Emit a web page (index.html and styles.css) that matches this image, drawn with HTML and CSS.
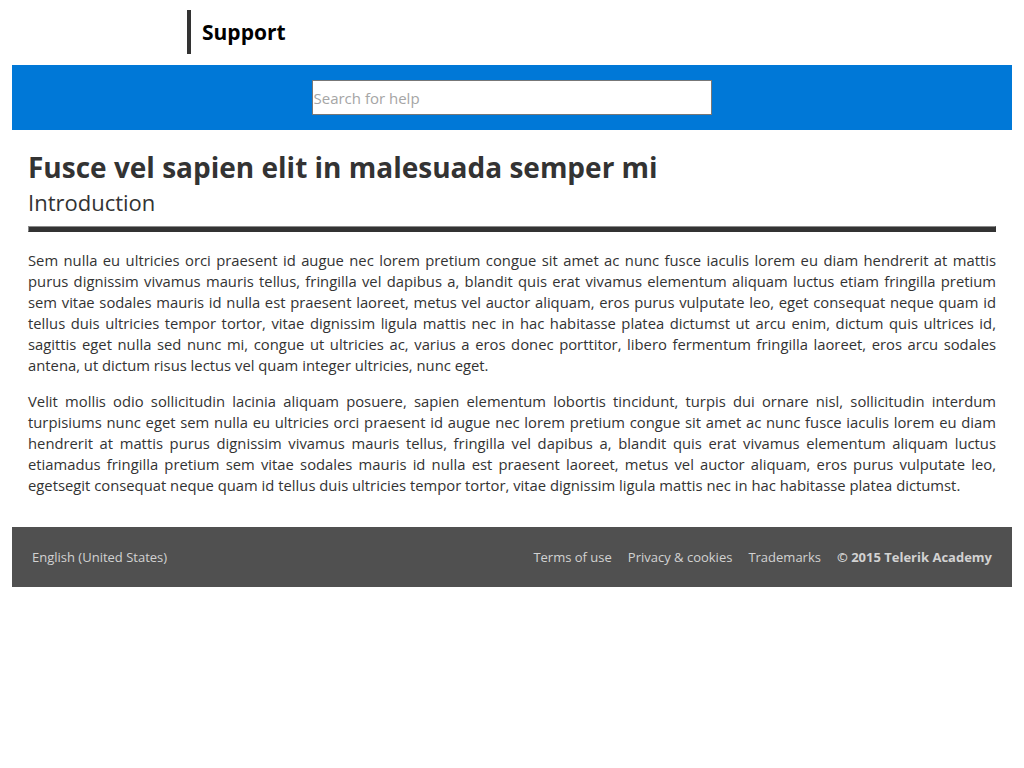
FILE: index.html
```html
<!DOCTYPE html>
<html lang="en">
<head>
<meta charset="utf-8">
<title>Support</title>
<link rel="stylesheet" href="styles.css">
</head>
<body>
<div class="page">
  <header class="top">
    <div class="brand">
      <span class="brand-bar"></span>
      <span class="brand-name">Support</span>
    </div>
  </header>
  <div class="search-band">
    <input class="search" type="text" placeholder="Search for help">
  </div>
  <main class="content">
    <h1 class="title">Fusce vel sapien elit in malesuada semper mi</h1>
    <h2 class="subtitle">Introduction</h2>
    <hr class="rule">
    <p class="para">Sem nulla eu ultricies orci praesent id augue nec lorem pretium congue sit amet ac nunc fusce iaculis lorem eu diam hendrerit at mattis purus dignissim vivamus mauris tellus, fringilla vel dapibus a, blandit quis erat vivamus elementum aliquam luctus etiam fringilla pretium sem vitae sodales mauris id nulla est praesent laoreet, metus vel auctor aliquam, eros purus vulputate leo, eget consequat neque quam id tellus duis ultricies tempor tortor, vitae dignissim ligula mattis nec in hac habitasse platea dictumst ut arcu enim, dictum quis ultrices id, sagittis eget nulla sed nunc mi, congue ut ultricies ac, varius a eros donec porttitor, libero fermentum fringilla laoreet, eros arcu sodales antena, ut dictum risus lectus vel quam integer ultricies, nunc eget.</p>
    <p class="para">Velit mollis odio sollicitudin lacinia aliquam posuere, sapien elementum lobortis tincidunt, turpis dui ornare nisl, sollicitudin interdum turpisiums nunc eget sem nulla eu ultricies orci praesent id augue nec lorem pretium congue sit amet ac nunc fusce iaculis lorem eu diam hendrerit at mattis purus dignissim vivamus mauris tellus, fringilla vel dapibus a, blandit quis erat vivamus elementum aliquam luctus etiamadus fringilla pretium sem vitae sodales mauris id nulla est praesent laoreet, metus vel auctor aliquam, eros purus vulputate leo, egetsegit consequat neque quam id tellus duis ultricies tempor tortor, vitae dignissim ligula mattis nec in hac habitasse platea dictumst.</p>
  </main>
  <footer class="foot">
    <span class="lang">English (United States)</span>
    <nav class="foot-links">
      <a class="foot-link" href="#">Terms of use</a>
      <a class="foot-link" href="#">Privacy &amp; cookies</a>
      <a class="foot-link" href="#">Trademarks</a>
      <span class="copy">© 2015 Telerik Academy</span>
    </nav>
  </footer>
</div>
</body>
</html>
```

FILE: styles.css
```css
html, body {
  margin: 0;
  padding: 0;
  background: #fff;
}
body {
  font-family: "Open Sans", "Noto Sans", sans-serif;
  color: #333;
}
.page {
  width: 1000px;
  margin: 0 auto;
}
.top {
  height: 65px;
  display: flex;
  align-items: flex-start;
}
.brand {
  display: flex;
  align-items: center;
  margin-left: 175px;
  margin-top: 10px;
  height: 44px;
}
.brand-bar {
  width: 4px;
  height: 44px;
  background: #333;
}
.brand-name {
  margin-left: 11px;
  font-size: 21px;
  font-weight: 700;
  color: #000;
  line-height: 1;
}
.search-band {
  background: #0078d7;
  padding: 15px 0;
  display: flex;
  justify-content: center;
}
.search {
  box-sizing: border-box;
  width: 400px;
  height: 35px;
  margin-right: 1px;
  border: 1px solid #777;
  padding: 0 0 0 1px;
  font-family: inherit;
  font-size: 15px;
  color: #333;
  outline: none;
}
.search::placeholder {
  color: #a5a5a5;
}
.content {
  padding: 19px 16px 16px;
}
.title {
  margin: 0;
  font-size: 28px;
  font-weight: 700;
  line-height: 36px;
  color: #333;
}
.subtitle {
  margin: 0;
  font-size: 22px;
  font-weight: 400;
  line-height: 34px;
  color: #333;
}
.rule {
  margin: 7px 0 18px;
  height: 4px;
  background: #333;
  border-style: solid;
  border-width: 1px;
  border-color: #8a8a8a #333 #333 #8a8a8a;
}
.para {
  margin: 0 0 15px;
  font-size: 14.8px;
  line-height: 21px;
  text-align: justify;
}
.foot {
  height: 60px;
  background: #505050;
  display: flex;
  align-items: center;
  justify-content: space-between;
  padding: 0 20px;
  font-size: 13px;
  color: #d2d2d2;
}
.foot-links {
  display: flex;
  gap: 16px;
}
.foot-link {
  color: #d2d2d2;
  text-decoration: none;
}
.copy {
  font-weight: 700;
}
```
